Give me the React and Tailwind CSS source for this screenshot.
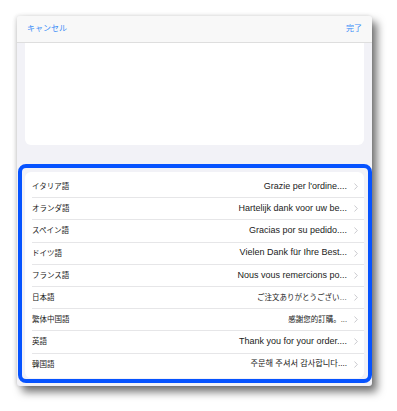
import React from "react";

const rows = [
  { label: "イタリア語", value: "Grazie per l'ordine....", size: "text-[9px]" },
  { label: "オランダ語", value: "Hartelijk dank voor uw be...", size: "text-[9px]" },
  { label: "スペイン語", value: "Gracias por su pedido....", size: "text-[9px]" },
  { label: "ドイツ語", value: "Vielen Dank für Ihre Best...", size: "text-[9px]" },
  { label: "フランス語", value: "Nous vous remercions po...", size: "text-[9px]" },
  { label: "日本語", value: "ご注文ありがとうござい…", size: "text-[7.5px]" },
  { label: "繁体中国語", value: "感謝您的訂購。...", size: "text-[7.5px]" },
  { label: "英語", value: "Thank you for your order....", size: "text-[9px]" },
  { label: "韓国語", value: "주문해 주셔서 감사합니다....", size: "text-[8.2px]" },
];

const font = {
  fontFamily: '"Liberation Sans", "Noto Sans CJK JP", sans-serif',
};

const Chevron = () => (
  <svg width="4" height="7" viewBox="0 0 4 7" className="shrink-0">
    <path d="M0.5 0.5 L3.3 3.5 L0.5 6.5" fill="none" stroke="#c4c4c8" strokeWidth="0.9" />
  </svg>
);

const App = () => {
  return (
    <div className="w-[397px] h-[411px] bg-white pt-[16px] pl-[17px]" style={font}>
      <div className="w-[355px] h-[370px] bg-[#f2f2f7] rounded-[3px] flex flex-col shadow-[5px_6px_9px_rgba(0,0,0,0.55),-1px_0_4px_rgba(0,0,0,0.15)]">
        {/* Header */}
        <div className="h-[27px] shrink-0 bg-[#f8f8f8] border-b border-[#dedede] rounded-t-[3px] flex items-center justify-between px-[10px]">
          <span className="text-[8px] text-[#3d8ef7]">キャンセル</span>
          <span className="text-[8px] text-[#3d8ef7]">完了</span>
        </div>

        {/* Text area */}
        <div className="mx-[8px] h-[102px] bg-white rounded-b-[6px]" />

        {/* Language list */}
        <div className="mt-[19px] ml-[1px] border-[4px] border-[#0653ff] rounded-[8px] bg-[#f2f2f7] pl-[3px] pr-[4px] pt-[4px] pb-[1px]">
          <div className="bg-white rounded-[6px] pt-[4px] pb-[2px]">
            {rows.map((row, i) => (
              <div key={i} className="h-[22.2px] pl-[7px] flex">
                <div
                  className={`flex-1 flex items-center justify-between pr-[6px] ${
                    i < rows.length - 1 ? "border-b border-[#e6e6e8]" : ""
                  }`}
                >
                  <span className="text-[7.5px] text-[#222]">{row.label}</span>
                  <div className="flex items-center gap-[7px]">
                    <span className={`${row.size} text-[#222]`}>{row.value}</span>
                    <Chevron />
                  </div>
                </div>
              </div>
            ))}
          </div>
        </div>
      </div>
    </div>
  );
};

export default App;
